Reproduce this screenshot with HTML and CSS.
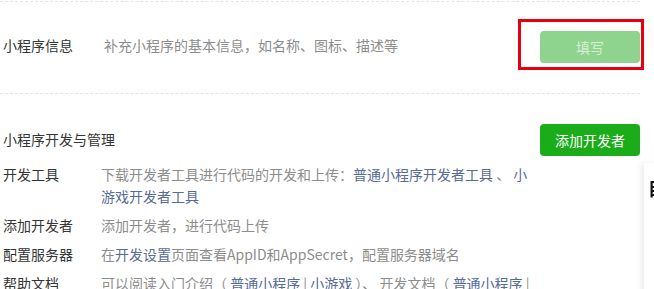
FILE: index.html
```html
<!DOCTYPE html>
<html lang="zh-CN">
<head>
<meta charset="utf-8">
<link rel="stylesheet" href="styles.css">
</head>
<body>
<div class="page">
  <section class="section info">
    <div class="info-text">
      <span class="info-label">小程序信息</span>
      <span class="info-desc">补充小程序的基本信息，如名称、图标、描述等</span>
    </div>
    <div class="btn-wrap">
      <button class="btn btn-disabled">填写</button>
      <span class="highlight"></span>
    </div>
  </section>
  <section class="section dev">
    <div class="dev-head">
      <span class="dev-title">小程序开发与管理</span>
      <button class="btn btn-primary">添加开发者</button>
    </div>
    <div class="dev-rows">
      <div class="row">
        <span class="row-label">开发工具</span>
        <span class="row-desc">下载开发者工具进行代码的开发和上传：<a class="link">普通小程序开发者工具</a> 、 <a class="link">小游戏开发者工具</a></span>
      </div>
      <div class="row">
        <span class="row-label">添加开发者</span>
        <span class="row-desc">添加开发者，进行代码上传</span>
      </div>
      <div class="row">
        <span class="row-label">配置服务器</span>
        <span class="row-desc">在<a class="link">开发设置</a>页面查看AppID和AppSecret，配置服务器域名</span>
      </div>
      <div class="row">
        <span class="row-label">帮助文档</span>
        <span class="row-desc">可以阅读入门介绍（ <a class="link">普通小程序</a> | <a class="link">小游戏</a> ）、 开发文档（ <a class="link">普通小程序</a> | <a class="link">小游戏</a> ）</span>
      </div>
    </div>
  </section>
</div>
<aside class="side-panel"><span class="side-text">目录</span></aside>
</body>
</html>
```
FILE: styles.css
```css
html, body {
  margin: 0;
  padding: 0;
  background: #ffffff;
}
body {
  font-family: "Microsoft YaHei", "Noto Sans CJK SC", "Noto Sans", sans-serif;
  font-size: 14px;
  color: #353535;
  overflow: hidden;
}
.page {
  width: 640px;
  padding-top: 1px;
}
.section {
  border-top: 1px dashed #e4e4e8;
}
.info {
  display: flex;
  align-items: center;
  justify-content: space-between;
  padding: 29px 0 30px 3px;
}
.info-text {
  display: flex;
  margin-bottom: 5px;
  line-height: 20px;
}
.info-label {
  width: 101px;
  color: #353535;
}
.info-desc {
  color: #8d8d8d;
}
.btn-wrap {
  position: relative;
}
.btn {
  display: block;
  width: 100px;
  height: 32px;
  border: 0;
  border-radius: 4px;
  font-family: inherit;
  font-size: 14px;
  padding: 0;
}
.btn-disabled {
  background: #8fd48e;
  color: rgba(255, 255, 255, 0.65);
}
.btn-primary {
  background: #1aad19;
  color: #ffffff;
}
.highlight {
  position: absolute;
  left: -22px;
  top: -12px;
  width: 120px;
  height: 45px;
  border: 3px solid #e60012;
}
.dev {
  padding: 30px 0 0 3px;
}
.dev-head {
  display: flex;
  align-items: center;
  justify-content: space-between;
  line-height: 20px;
}
.dev-title {
  margin-bottom: 3px;
}
.dev-rows {
  display: flex;
  flex-direction: column;
  gap: 7px;
  padding-top: 7px;
}
.row {
  display: flex;
  line-height: 22px;
}
.row-label {
  width: 98px;
  flex: none;
  color: #353535;
}
.row-desc {
  width: 436px;
  color: #8d8d8d;
}
.link {
  color: #576b95;
  text-decoration: none;
}
.side-panel {
  position: fixed;
  left: 644px;
  top: 163px;
  width: 220px;
  height: 300px;
  background: #ffffff;
  box-shadow: -3px 0 6px rgba(0, 0, 0, 0.07);
  padding: 12px 0 0 7px;
  box-sizing: border-box;
}
.side-text {
  font-size: 18px;
  color: #111111;
  font-weight: bold;
  margin-left: -3px;
}
```
